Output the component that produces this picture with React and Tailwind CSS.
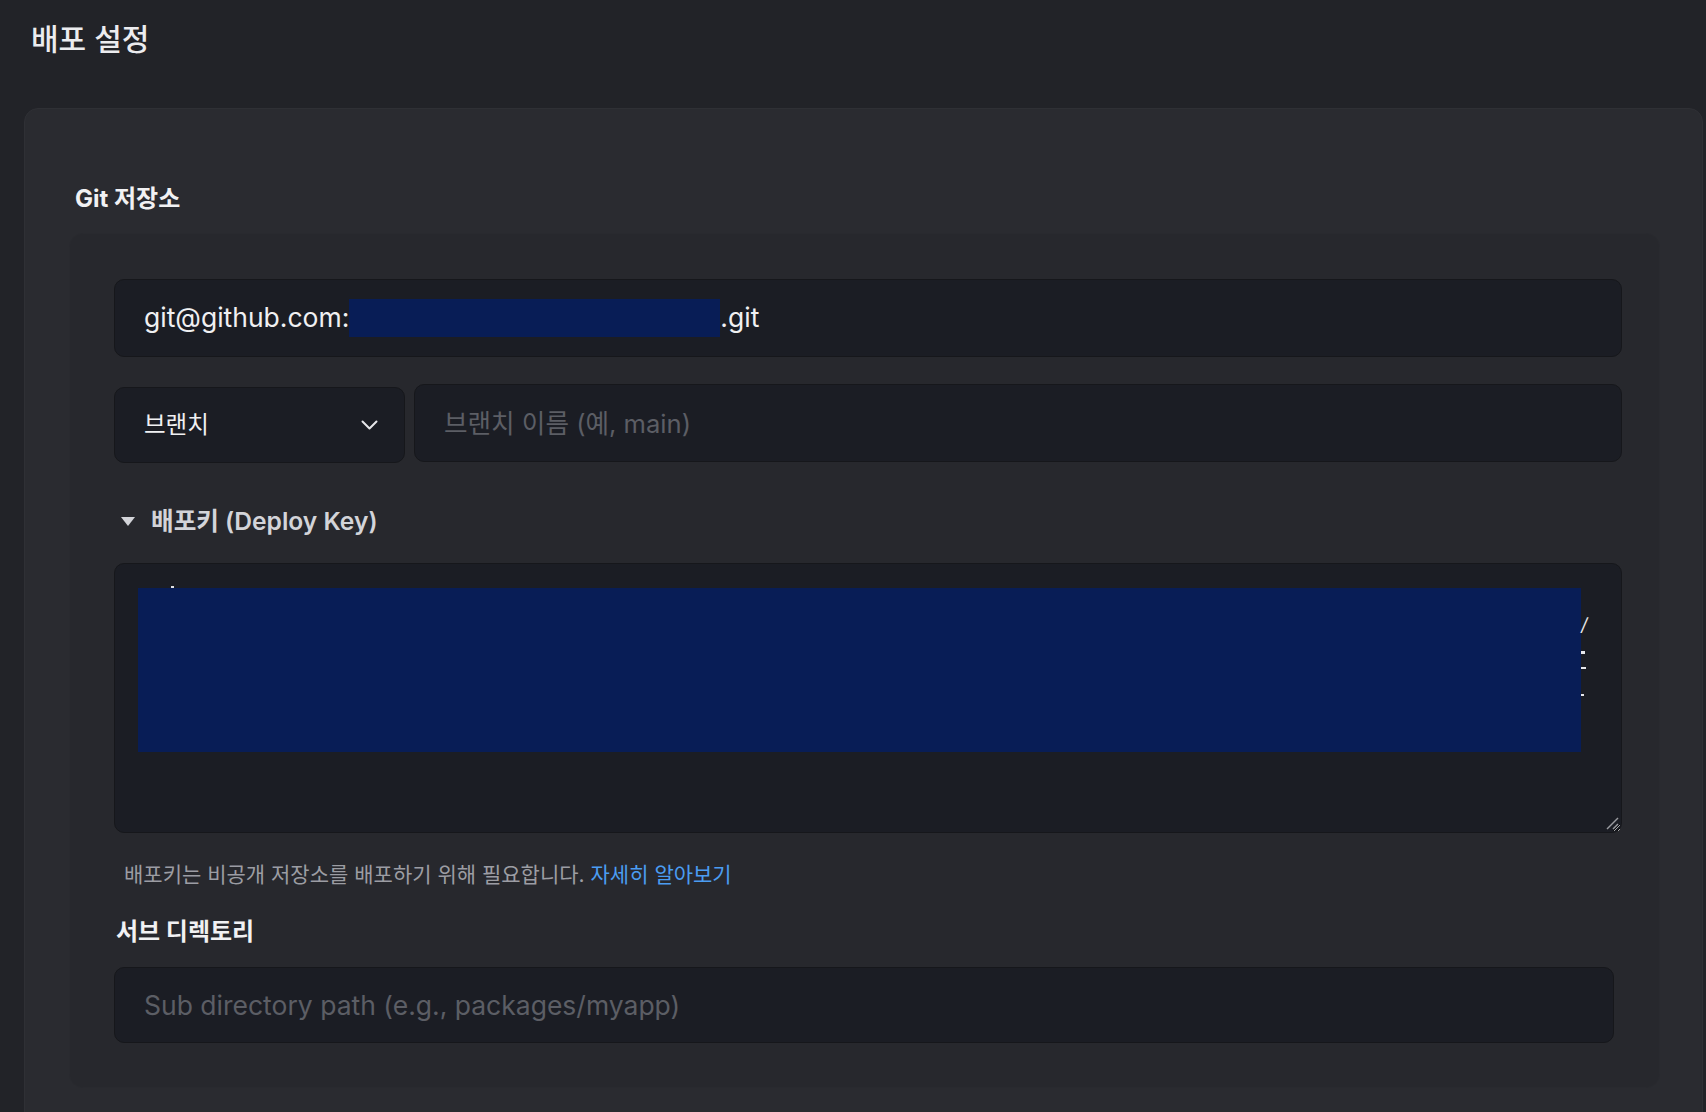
import { useState } from 'react';

const Chevron = () => (
  <svg width="17" height="10" viewBox="0 0 17 10" fill="none" className="shrink-0">
    <polyline points="1.5,1.5 8.5,8.5 15.5,1.5" stroke="#e6e6ea" strokeWidth="2" strokeLinecap="round" strokeLinejoin="round" />
  </svg>
);

export default function App() {
  const [url, setUrl]         = useState('');
  const [branch, setBranch]   = useState('');
  const [subdir, setSubdir]   = useState('');
  const [open, setOpen]       = useState(true);

  return (
    <div className="h-[1112px] overflow-hidden bg-[#222328] font-['Inter','Noto_Sans_CJK_KR',sans-serif]">
      {/* Page title */}
      <div className="pl-[31px] pt-[19px]">
        <h1 className="text-[30px] leading-[40px] font-medium text-[#ececef]">배포 설정</h1>
      </div>

      {/* Outer card */}
      <div className="mt-[49px] ml-[24px] mr-[3px] h-[1100px] rounded-t-[14px] border border-[#2f3035] bg-[#2a2b30] pl-[44px] pr-[42px] pt-[75px]">
        <h2 className="ml-[6px] text-[24px] leading-[30px] font-bold text-[#f1f1f3]">Git 저장소</h2>

        {/* Inner card */}
        <div className="mt-[19px] rounded-[14px] bg-[#27282d] border border-[#292a2f] pl-[44px] pr-[37px] pt-[45px] pb-[44px]">
          {/* Repository URL */}
          <div className="relative flex h-[78px] items-center rounded-[10px] border border-[#16171b] bg-[#1b1d24] px-[29px] text-[26.5px] text-[#f0f0f2]">
            <span>git@github.com:</span>
            <span className="h-[38px] w-[371px] bg-[#081d56]" />
            <span>.git</span>
            <input
              value={url}
              onChange={(e) => setUrl(e.target.value)}
              className="absolute inset-0 bg-transparent opacity-0"
            />
          </div>

          {/* Branch row */}
          <div className="mt-[27px] flex items-start gap-[9px]">
            <button className="mt-[3px] flex h-[76px] w-[291px] items-center justify-between rounded-[10px] border border-[#16171b] bg-[#1b1d24] pl-[29px] pr-[26px] text-[23.5px] text-[#f0f0f2]">
              <span>브랜치</span>
              <Chevron />
            </button>
            <input
              value={branch}
              onChange={(e) => setBranch(e.target.value)}
              placeholder="브랜치 이름 (예, main)"
              className="h-[78px] flex-1 rounded-[10px] border border-[#16171b] bg-[#1b1d24] px-[29px] text-[25.6px] text-[#f0f0f2] outline-none placeholder:text-[#5c5e65]"
            />
          </div>

          {/* Deploy key */}
          <button
            onClick={() => setOpen(!open)}
            className="mt-[42px] ml-[7px] flex h-[32px] items-center gap-[16px] text-[24.6px] font-semibold text-[#d3d4d9]"
          >
            <svg width="14" height="9" viewBox="0 0 14 9" className={open ? '' : '-rotate-90'}>
              <polygon points="0,0 14,0 7,9" fill="#d3d4d9" />
            </svg>
            <span>배포키 (Deploy Key)</span>
          </button>

          {open && (
            <div className="relative mt-[26px]">
              <textarea
                readOnly
                className="block h-[270px] w-full resize-y rounded-[10px] border border-[#16171b] bg-[#1b1d24] px-[24px] py-[20px] font-['Liberation_Mono',monospace] text-[20px] leading-[36px] text-[#f0f0f2] outline-none"
              />
              {/* redacted key */}
              <div className="absolute left-[24px] top-[25px] h-[164px] w-[1443px] bg-[#081d56]" />
              <span className="absolute left-[57px] top-[23px] h-[2px] w-[3px] bg-[#e0e0e4]" />
              <span className="absolute left-[1467px] top-[52px] text-[18px] leading-[20px] italic text-[#e8e8ec]">/</span>
              <span className="absolute left-[1467px] top-[88px] h-[3px] w-[4px] bg-[#e8e8ec]" />
              <span className="absolute left-[1467px] top-[104px] h-[2px] w-[5px] bg-[#e8e8ec]" />
              <span className="absolute left-[1467px] top-[131px] h-[2px] w-[3px] bg-[#e8e8ec]" />
              {/* resize grip */}
              <svg width="14" height="14" viewBox="0 0 14 14" className="pointer-events-none absolute bottom-[3px] right-[3px]">
                <line x1="2" y1="13" x2="13" y2="2" stroke="#9a9ba0" strokeWidth="1.5" />
                <line x1="8" y1="13" x2="13" y2="8" stroke="#9a9ba0" strokeWidth="1.5" />
              </svg>
            </div>
          )}

          <p className="mt-[28px] ml-[10px] text-[21px] leading-[28px] text-[#9c9da3]">
            배포키는 비공개 저장소를 배포하기 위해 필요합니다.{' '}
            <a href="#" className="text-[#4b9df2]">자세히 알아보기</a>
          </p>

          {/* Sub directory */}
          <h3 className="mt-[28px] ml-[2px] text-[24px] leading-[30px] font-bold text-[#f1f1f3]">서브 디렉토리</h3>
          <input
            value={subdir}
            onChange={(e) => setSubdir(e.target.value)}
            placeholder="Sub directory path (e.g., packages/myapp)"
            className="mt-[20px] mr-[8px] block h-[76px] w-[calc(100%-8px)] rounded-[10px] border border-[#16171b] bg-[#1b1d24] px-[29px] text-[26.5px] text-[#f0f0f2] outline-none placeholder:text-[#5c5e65]"
          />
        </div>
      </div>
    </div>
  );
}
